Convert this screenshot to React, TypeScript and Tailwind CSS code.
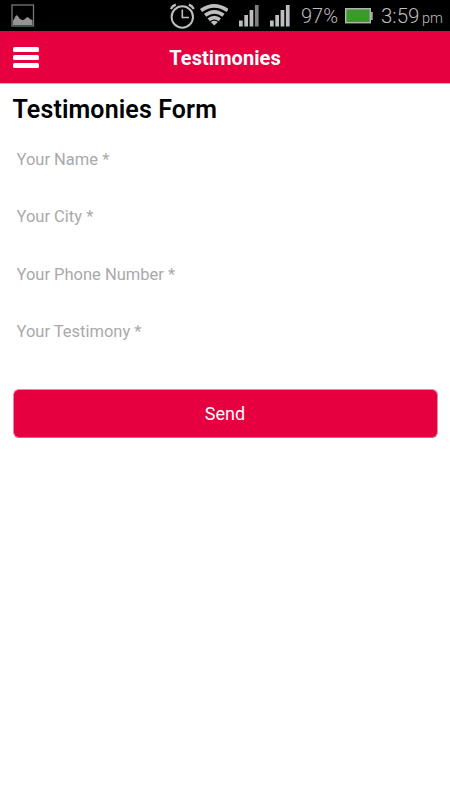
import React from "react";

function PictureIcon() {
  return (
    <svg className="ml-[11px] h-[31px] w-6 shrink-0" viewBox="0 0 24 31" fill="none">
      <rect x="1" y="5" width="21.500" height="21" stroke="#777" strokeWidth="1.300" />
      <path d="M2 25V20.500q1-.5 2-3.500Q5.500 13.500 7.500 17l1.500 2q1.500.3 2.500 1.300q2-.3 3.500-2.300 1.500-1.500 3 0 1.500 2 3.500 2V25Z" fill="#949494" />
    </svg>
  );
}

function AlarmIcon() {
  return (
    <svg className="h-[31px] w-7 shrink-0" viewBox="168 0 28 31" fill="none" stroke="#bebebe">
      <circle cx="182.300" cy="17" r="10.700" strokeWidth="2" />
      <path d="M182.300 9.500v8h6.700" strokeWidth="1.600" />
      <path d="M170.900 8.900q1.500-3 4.900-4.200M193.700 8.900q-1.500-3-4.900-4.200" strokeWidth="2.300" />
    </svg>
  );
}

function WifiIcon() {
  return (
    <svg className="ml-1 h-[31px] w-7 shrink-0" viewBox="200 0 28 31" fill="none" stroke="#bebebe" strokeWidth="3.700">
      <path d="M201 10.500q13.300-9.200 26.600 0" />
      <path d="M205.100 15.300q9.200-6.800 18.400 0" />
      <path d="M208.700 19.700q5.600-4.200 11.200 0" />
      <path d="M210.700 21.900q3.600-2.300 7.200 0l-3.600 3.700Z" fill="#bebebe" stroke="none" />
    </svg>
  );
}

function SignalIcon({ last }: { last: string }) {
  return (
    <svg className="h-[31px] w-5 shrink-0" viewBox="0 0 20 31" fill="#bebebe">
      <rect x="0" y="20.500" width="3.700" height="6" />
      <rect x="5.300" y="15" width="3.700" height="11.500" />
      <rect x="10.600" y="10" width="3.700" height="16.500" />
      <rect x="15.900" y="5" width="3.700" height="21.500" fill={last} />
    </svg>
  );
}

function BatteryIcon() {
  return (
    <svg className="h-[31px] w-7 shrink-0" viewBox="345 0 28 31">
      <path d="M369 12h3.700v8H369Z" fill="#aaa" />
      <rect x="345.700" y="8.700" width="24.600" height="14" fill="#3c9a2b" stroke="#b4b4b4" strokeWidth="1.400" />
    </svg>
  );
}

function StatusBar() {
  return (
    <div className="flex h-[31px] items-center bg-black font-['Roboto',sans-serif] font-light leading-[31px] text-[#bebebe]">
      <PictureIcon />
      <div className="ml-[133px] flex h-[31px] items-center whitespace-nowrap">
        <AlarmIcon />
        <WifiIcon />
        <div className="ml-[10.500px] flex gap-[11.500px]">
          <SignalIcon last="#808080" />
          <SignalIcon last="#bebebe" />
        </div>
        <span className="ml-[11px] w-[44px] pt-[2px] text-[20px]">97%</span>
        <BatteryIcon />
        <span className="ml-2 w-[41px] pt-[2px] text-[20.500px]">3:59</span>
        <span className="pt-[6px] text-[14.500px]">pm</span>
      </div>
    </div>
  );
}

const fields = ["Your Name *", "Your City *", "Your Phone Number *", "Your Testimony *"];

export default function App() {
  return (
    <div className="min-h-screen w-full bg-white font-['Roboto',sans-serif]">
      <StatusBar />
      <header className="grid h-[53px] grid-cols-[1fr_auto_1fr] items-center border-b border-[#f3a0b0] bg-[#e60040] px-[13px]">
        <button aria-label="Menu" className="flex w-[26px] flex-col gap-[3.500px] pt-px">
          <span className="h-[4.800px] rounded-[1.500px] bg-white" />
          <span className="h-[4.800px] rounded-[1.500px] bg-white" />
          <span className="h-[4.800px] rounded-[1.500px] bg-white" />
        </button>
        <h1 className="pt-[2px] text-[20px] font-bold leading-6 tracking-[0.070px] text-white">Testimonies</h1>
      </header>
      <main className="px-[12.500px] pt-[10px]">
        <h2 className="text-[25px] font-semibold leading-[31px] tracking-[0.120px] text-black">Testimonies Form</h2>
        <form className="pt-[14px]">
          {fields.map((label) => (
            <input
              key={label}
              placeholder={label}
              className="mb-[17.500px] block h-10 w-full px-[4px] text-[16.500px] text-black outline-none placeholder:text-[#a9a9a9]"
            />
          ))}
          <button
            type="button"
            className="mt-[37px] block h-[49px] w-full rounded-md border border-[#e88a9d] border-b-[#a08088] bg-[#e60040] text-[18px] text-white"
          >
            Send
          </button>
        </form>
      </main>
    </div>
  );
}
